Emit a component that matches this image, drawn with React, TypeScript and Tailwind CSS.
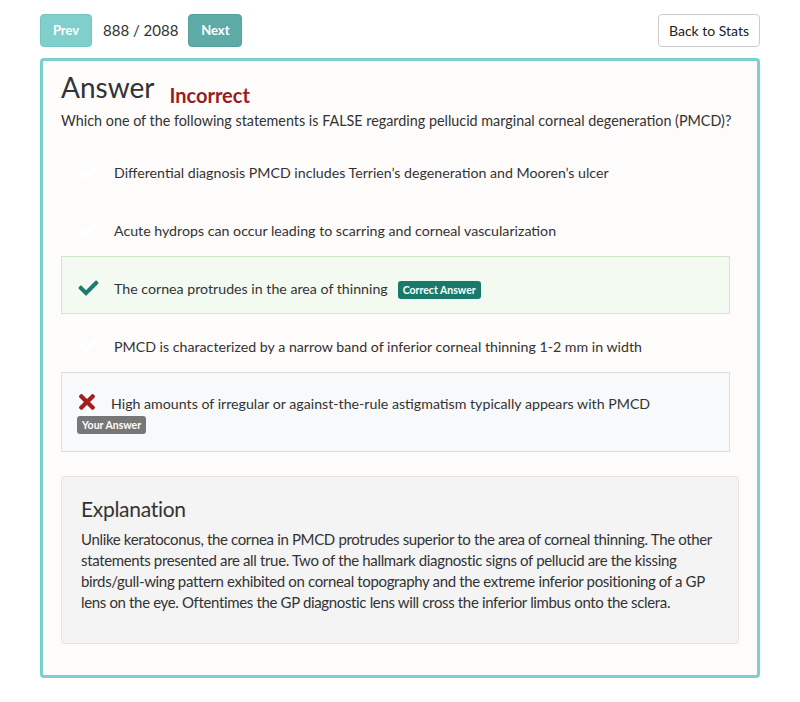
import React from "react";

const Check = ({ className }: { className?: string }) => (
  <svg viewBox="0 0 512 512" className={className} fill="currentColor">
    <path d="M173.898 439.404l-166.4-166.4c-9.997-9.997-9.997-26.206 0-36.204l36.203-36.204c9.997-9.998 26.207-9.998 36.204 0L192 312.69 432.095 72.596c9.997-9.997 26.207-9.997 36.204 0l36.203 36.204c9.997 9.997 9.997 26.206 0 36.204l-294.4 294.401c-9.998 9.997-26.207 9.997-36.204-.001z" />
  </svg>
);

const Cross = ({ className }: { className?: string }) => (
  <svg viewBox="0 80 352 352" className={className} fill="currentColor">
    <path d="M242.72 256l100.07-100.07c12.28-12.28 12.28-32.19 0-44.48l-22.24-22.24c-12.28-12.28-32.19-12.28-44.480 0L176 189.28 75.93 89.21c-12.28-12.28-32.19-12.28-44.48 0L9.21 111.45c-12.28 12.28-12.28 32.19 0 44.48L109.28 256 9.21 356.07c-12.28 12.28-12.28 32.19 0 44.48l22.24 22.24c12.28 12.28 32.2 12.28 44.48 0L176 322.72l100.07 100.07c12.28 12.28 32.2 12.28 44.48 0l22.24-22.24c12.28-12.28 12.28-32.19 0-44.48L242.72 256z" />
  </svg>
);

export default function App() {
  const font = { fontFamily: "Lato, 'Open Sans', sans-serif" };
  return (
    <div className="w-[800px] h-[702px] bg-white text-[#333]" style={font}>
      <div className="px-[40px] pt-[14px]">
        <div className="flex items-center h-[33px]">
          <button className="h-[33px] w-[52px] rounded-[4px] bg-[#80cfcc] border border-[#74c4c1] text-white text-[13px] font-bold">
            Prev
          </button>
          <span className="ml-[11px] text-[15px] text-[#333]">888 / 2088</span>
          <button className="ml-[10px] h-[33px] w-[54px] rounded-[4px] bg-[#5eaaa7] border border-[#56a19e] text-white text-[13px] font-bold">
            Next
          </button>
          <button className="ml-auto h-[33px] w-[102px] rounded-[4px] bg-white border border-[#ccc] text-[14px] text-[#222]">
            Back to Stats
          </button>
        </div>

        <div className="mt-[11px] border-[3px] border-[#7dcfcc] rounded-[4px] bg-[#fdfcfb] h-[620px] px-[18px]">
          <div className="flex items-end pt-[9px]">
            <h1 className="text-[28px] leading-[35px] text-[#333]">Answer</h1>
            <span className="ml-[15px] text-[20px] leading-[24px] font-bold text-[#9b1c1c] mb-[-2px]">
              Incorrect
            </span>
          </div>
          <p className="mt-[6px] text-[14.35px] leading-[20px] text-[#333] whitespace-nowrap">
            Which one of the following statements is FALSE regarding pellucid marginal corneal degeneration (PMCD)?
          </p>

          <div className="mt-[9px] mr-[9px]">
            <div className="h-[58px] flex items-start pt-[22px] px-[16px] border border-transparent">
              <Check className="w-[20px] h-[20px] text-white mt-[-1px]" />
              <span className="ml-[16px] text-[14.2px] leading-[20px]">
                Differential diagnosis PMCD includes Terrien’s degeneration and Mooren’s ulcer
              </span>
            </div>
            <div className="h-[58px] flex items-start pt-[22px] px-[16px] border border-transparent">
              <Check className="w-[20px] h-[20px] text-white mt-[-1px]" />
              <span className="ml-[16px] text-[14.2px] leading-[20px]">
                Acute hydrops can occur leading to scarring and corneal vascularization
              </span>
            </div>
            <div className="h-[58px] flex items-start pt-[21px] px-[16px] border border-[#cfe6cb] bg-[#f3faf2]">
              <Check className="w-[21px] h-[20px] text-[#1d7a6c] mt-[0px]" />
              <span className="ml-[15px] text-[14.2px] leading-[20px] mt-[1px]">
                The cornea protrudes in the area of thinning
              </span>
              <span className="ml-[10px] mt-[3px] h-[18px] px-[5px] rounded-[3px] bg-[#1a7a6a] text-white text-[10.5px] font-bold leading-[18px]">
                Correct Answer
              </span>
            </div>
            <div className="h-[58px] flex items-start pt-[22px] px-[16px] border border-transparent">
              <Check className="w-[20px] h-[20px] text-white mt-[-1px]" />
              <span className="ml-[16px] text-[14.2px] leading-[20px]">
                PMCD is characterized by a narrow band of inferior corneal thinning 1-2 mm in width
              </span>
            </div>
            <div className="h-[80px] pt-[21px] px-[16px] pl-[15px] border border-[#dddddd] bg-[#f8f9fa]">
              <div className="flex items-start">
                <Cross className="w-[16px] h-[16px] text-[#a31f1f] mt-[0px] ml-[2px]" />
                <span className="ml-[16px] text-[14.2px] leading-[20px]">
                  High amounts of irregular or against-the-rule astigmatism typically appears with PMCD
                </span>
              </div>
              <div className="flex mt-[2px]">
                <span className="h-[18px] px-[5px] rounded-[3px] bg-[#777] text-white text-[10.5px] font-bold leading-[18px]">
                  Your Answer
                </span>
              </div>
            </div>
          </div>

          <div className="mt-[24px] h-[168px] rounded-[4px] border border-[#e3e3e3] bg-[#f4f4f4] px-[19px] pt-[18px]">
            <h2 className="text-[21px] leading-[28px] text-[#333] tracking-[-0.3px]">Explanation</h2>
            <p className="mt-[6px] text-[15px] leading-[21px] text-[#333] tracking-[-0.35px]">
              Unlike keratoconus, the cornea in PMCD protrudes superior to the area of corneal thinning. The other statements presented are all true. Two of the hallmark diagnostic signs of pellucid are the kissing birds/gull-wing pattern exhibited on corneal topography and the extreme inferior positioning of a GP lens on the eye. Oftentimes the GP diagnostic lens will cross the inferior limbus onto the sclera.
            </p>
          </div>
        </div>
      </div>
    </div>
  );
}
